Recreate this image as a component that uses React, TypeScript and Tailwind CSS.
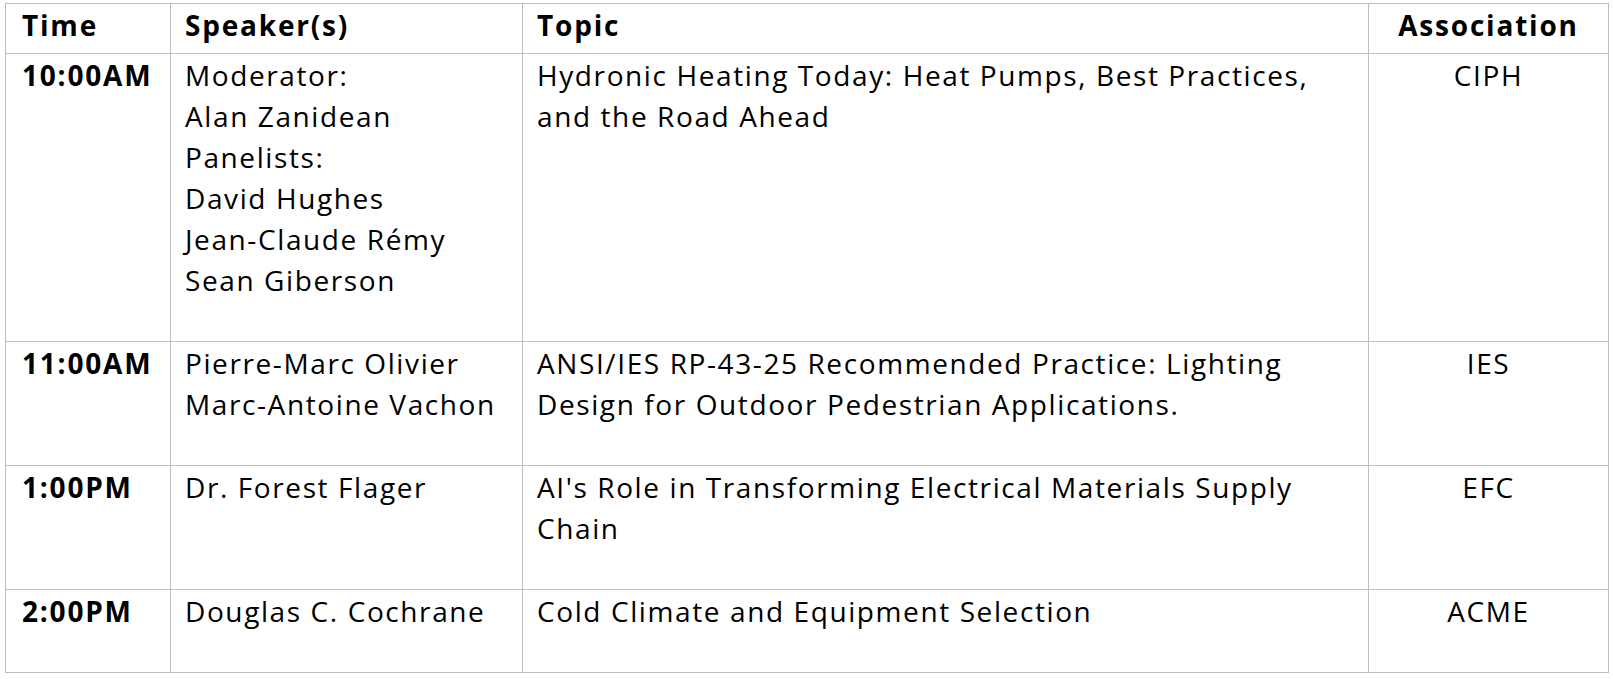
import React from "react";

type Row = { time: string; speakers: string[]; topic: string; assoc: string };

const rows: Row[] = [
  {
    time: "10:00AM",
    speakers: [
      "Moderator:",
      "Alan Zanidean",
      "Panelists:",
      "David Hughes",
      "Jean-Claude Rémy",
      "Sean Giberson",
    ],
    topic: "Hydronic Heating Today: Heat Pumps, Best Practices, and the Road Ahead",
    assoc: "CIPH",
  },
  {
    time: "11:00AM",
    speakers: ["Pierre-Marc Olivier", "Marc-Antoine Vachon"],
    topic:
      "ANSI/IES RP-43-25 Recommended Practice: Lighting Design for Outdoor Pedestrian Applications.",
    assoc: "IES",
  },
  {
    time: "1:00PM",
    speakers: ["Dr. Forest Flager"],
    topic: "AI's Role in Transforming Electrical Materials Supply Chain",
    assoc: "EFC",
  },
  {
    time: "2:00PM",
    speakers: ["Douglas C. Cochrane"],
    topic: "Cold Climate and Equipment Selection",
    assoc: "ACME",
  },
];

const cell = "border border-[#bfbfbf] align-top pl-[14px] pr-3";
const timeCell = "border border-[#bfbfbf] align-top pl-4 pr-2";

export default function App() {
  return (
    <div className="bg-white w-[1613px] h-[679px] pl-[5px] pt-[3px] text-black font-['Open_Sans',sans-serif] text-[28px] leading-[41px] tracking-[1.6px]">
      <table className="table-fixed border-collapse w-[1603px]">
        <colgroup>
          <col className="w-[165px]" />
          <col className="w-[352px]" />
          <col className="w-[846px]" />
          <col className="w-[240px]" />
        </colgroup>
        <thead>
          <tr className="font-bold tracking-[1.8px]">
            <th className={`${timeCell} text-left pt-[1px] pb-[7px]`}>Time</th>
            <th className={`${cell} text-left pt-[1px] pb-[7px]`}>Speaker(s)</th>
            <th className={`${cell} text-left pt-[1px] pb-[7px]`}>Topic</th>
            <th className="border border-[#bfbfbf] align-top px-2 text-center pt-[1px] pb-[7px]">
              Association
            </th>
          </tr>
        </thead>
        <tbody>
          {rows.map((r) => (
            <tr key={r.time}>
              <td className={`${timeCell} font-bold tracking-[1.8px] pt-[1px] pb-[40px] whitespace-nowrap`}>
                {r.time}
              </td>
              <td className={`${cell} pt-[1px] pb-[40px]`}>
                {r.speakers.map((s) => (
                  <div key={s} className="whitespace-nowrap">{s}</div>
                ))}
              </td>
              <td className={`${cell} pt-[1px] pb-[40px]`}>{r.topic}</td>
              <td className="border border-[#bfbfbf] align-top px-2 text-center pt-[1px] pb-[40px]">
                {r.assoc}
              </td>
            </tr>
          ))}
        </tbody>
      </table>
    </div>
  );
}
